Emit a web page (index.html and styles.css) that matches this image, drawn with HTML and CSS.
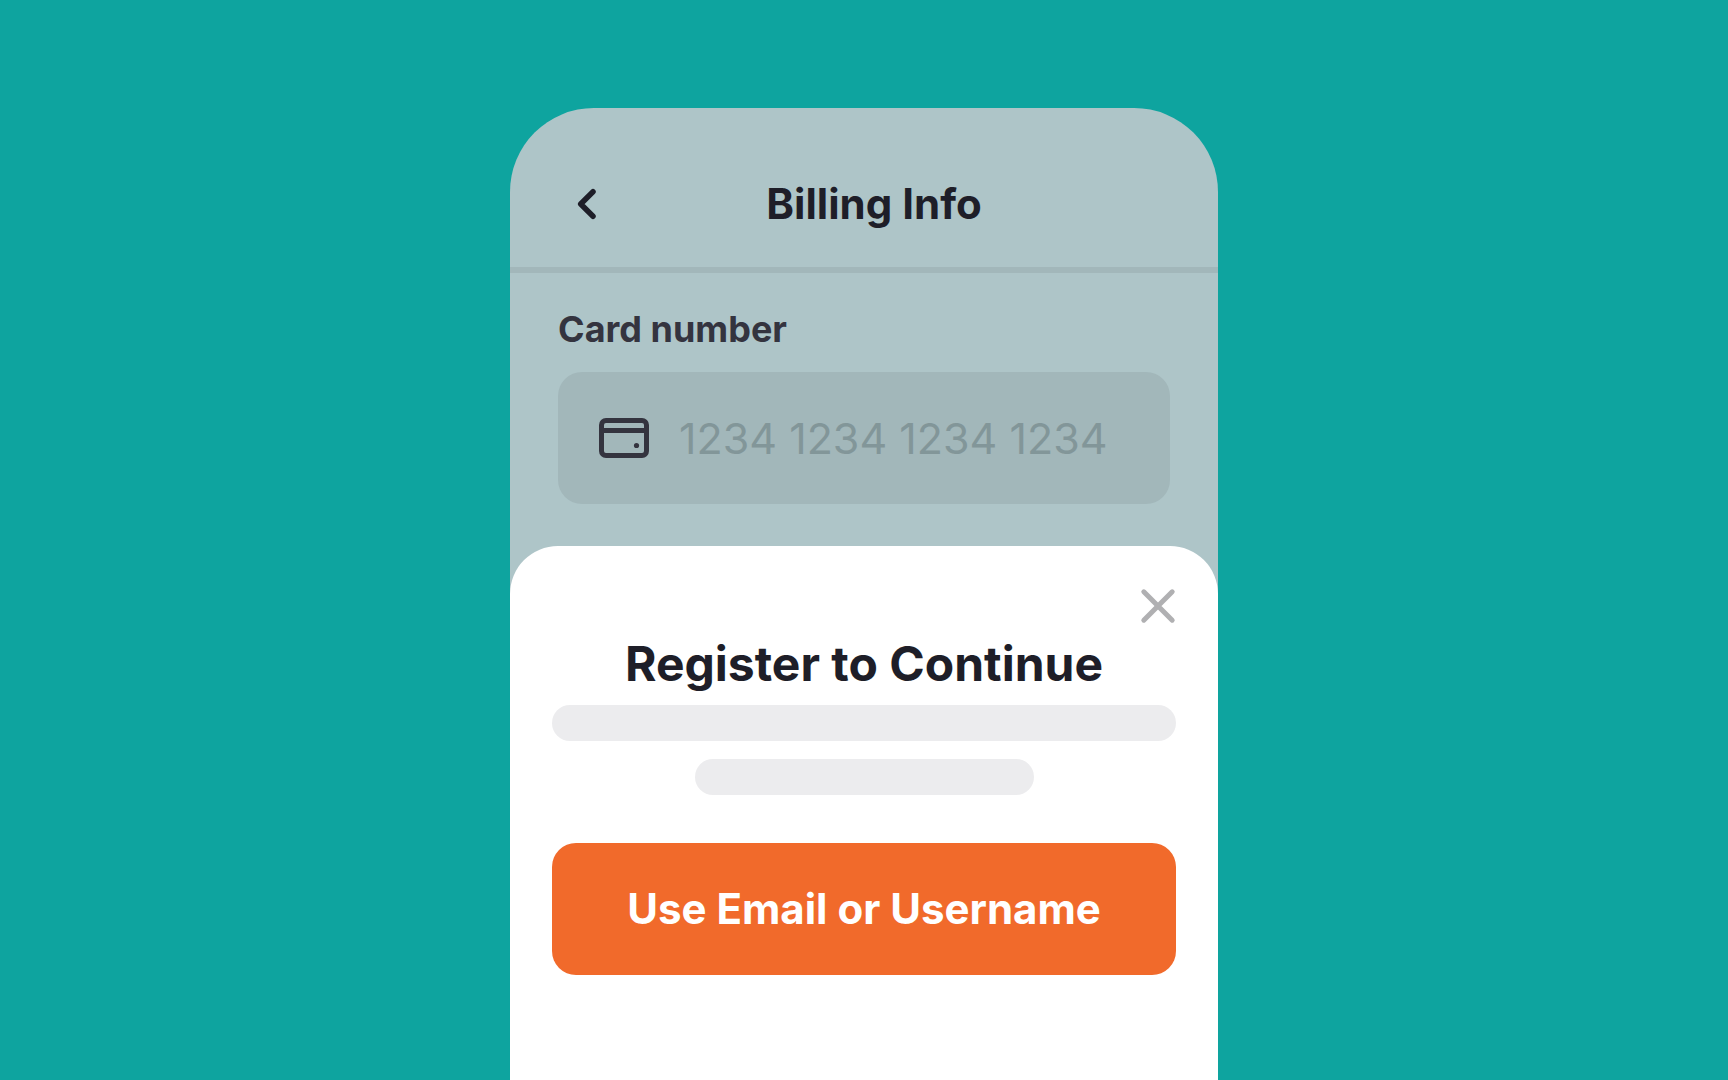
FILE: index.html
```html
<!DOCTYPE html>
<html lang="en">
<head>
  <meta charset="utf-8">
  <meta name="viewport" content="width=device-width, initial-scale=1">
  <title>Billing Info</title>
  <link rel="stylesheet" href="styles.css">
</head>
<body>
  <main class="phone">
    <header class="header">
      <button class="icon-button" type="button" aria-label="Back">
        <svg width="24" height="36" viewBox="0 0 24 36" fill="none" stroke="currentColor" stroke-width="5.500" stroke-linecap="round" stroke-linejoin="round" aria-hidden="true">
          <path d="M17 5.700 4.700 18 17 30.300"/>
        </svg>
      </button>
      <h1 class="header-title">Billing Info</h1>
    </header>

    <form class="billing">
      <label class="label" for="card">Card number</label>
      <div class="field">
        <svg class="field-icon" width="50" height="40" viewBox="0 0 50 40" fill="none" stroke="currentColor" stroke-width="5" aria-hidden="true">
          <rect x="2.500" y="2.500" width="45" height="35" rx="4.500"/>
          <path d="M2.500 12.500h45"/>
          <circle cx="37.500" cy="27.500" r="2.600" fill="currentColor" stroke="none"/>
        </svg>
        <input class="field-input" id="card" type="text" inputmode="numeric" placeholder="1234 1234 1234 1234">
      </div>
    </form>

    <section class="sheet" role="dialog" aria-labelledby="sheet-title">
      <button class="close" type="button" aria-label="Close">
        <svg width="36" height="36" viewBox="0 0 36 36" fill="none" stroke="currentColor" stroke-width="5" stroke-linecap="round" aria-hidden="true">
          <path d="M3.800 3.800 32.200 32.200M32.200 3.800 3.800 32.200"/>
        </svg>
      </button>
      <h2 class="sheet-title" id="sheet-title">Register to Continue</h2>
      <div class="lines" aria-hidden="true">
        <div class="line"></div>
        <div class="line line-short"></div>
      </div>
      <button class="primary" type="button">Use Email or Username</button>
    </section>
  </main>
</body>
</html>
```

FILE: styles.css
```css
* {
  box-sizing: border-box;
}

body {
  display: flex;
  flex-direction: column;
  align-items: center;
  min-height: 100vh;
  margin: 0;
  padding-top: 108px;
  background: #0ea49f;
  color: #1e1e28;
  font-family: Inter, "Liberation Sans", sans-serif;
}

button {
  padding: 0;
  border: 0;
  background: none;
  color: inherit;
  font: inherit;
  cursor: pointer;
}

svg {
  display: block;
}

h1,
h2 {
  margin: 0;
}

.phone {
  display: flex;
  flex: 1;
  flex-direction: column;
  width: 100%;
  max-width: 708px;
  border-radius: 84px 84px 0 0;
  background: #aec5c8;
}

.header {
  display: grid;
  grid-template-columns: 60px 1fr 40px;
  align-items: center;
  padding: 66px 48px 33px;
  border-bottom: 6px solid #a2b7ba;
}

.icon-button {
  display: grid;
  place-items: center;
  height: 60px;
}

.header-title {
  font-size: 42px;
  font-weight: 700;
  line-height: 60px;
  text-align: center;
}

.billing {
  display: flex;
  flex-direction: column;
  gap: 19px;
  padding: 32px 48px 42px;
}

.label {
  color: #34343f;
  font-size: 36px;
  font-weight: 700;
  line-height: 48px;
}

.field {
  display: flex;
  align-items: center;
  gap: 30px;
  height: 132px;
  padding: 0 41px;
  border-radius: 24px;
  background: #a2b7ba;
}

.field-icon {
  flex: none;
  color: #34343f;
}

.field-input {
  flex: 1;
  min-width: 0;
  height: 60px;
  padding: 0;
  border: 0;
  outline: 0;
  background: none;
  color: #34343f;
  font: 400 43px/60px Inter, "Liberation Sans", sans-serif;
}

.field-input::placeholder {
  color: #829699;
  opacity: 1;
}

.sheet {
  display: flex;
  flex: 1;
  flex-direction: column;
  padding: 42px 42px 105px;
  border-radius: 48px 48px 0 0;
  background: #fff;
}

.close {
  align-self: flex-end;
  color: #b0b0b2;
}

.sheet-title {
  margin-top: 10px;
  font-size: 48px;
  font-weight: 700;
  line-height: 60px;
  text-align: center;
}

.lines {
  display: flex;
  flex-direction: column;
  align-items: center;
  gap: 18px;
  margin: 11px 0 48px;
}

.line {
  width: 100%;
  height: 36px;
  border-radius: 18px;
  background: #ececee;
}

.line-short {
  max-width: 339px;
}

.primary {
  height: 132px;
  padding-bottom: 2px;
  border-radius: 24px;
  background: #f16a2b;
  color: #fff;
  font-size: 42px;
  font-weight: 700;
}
```
